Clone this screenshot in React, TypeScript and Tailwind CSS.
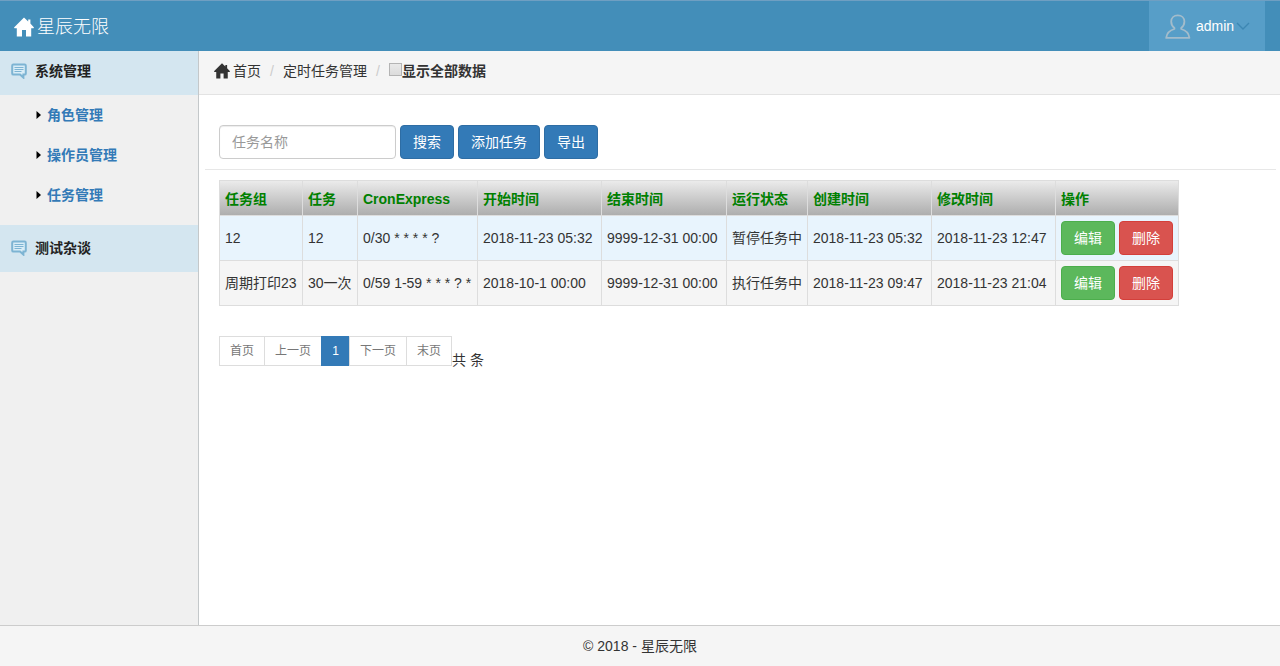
import { useState } from "react";

type Task = {
  id: number;
  group: string;
  name: string;
  cron: string;
  start: string;
  end: string;
  status: string;
  created: string;
  modified: string;
};

const TASKS: Task[] = [
  {
    id: 1,
    group: "12",
    name: "12",
    cron: "0/30 * * * * ?",
    start: "2018-11-23 05:32",
    end: "9999-12-31 00:00",
    status: "暂停任务中",
    created: "2018-11-23 05:32",
    modified: "2018-11-23 12:47",
  },
  {
    id: 2,
    group: "周期打印23",
    name: "30一次",
    cron: "0/59 1-59 * * * ? *",
    start: "2018-10-1 00:00",
    end: "9999-12-31 00:00",
    status: "执行任务中",
    created: "2018-11-23 09:47",
    modified: "2018-11-23 21:04",
  },
];

const COLUMNS = [
  { label: "任务组", width: "w-[83px]" },
  { label: "任务", width: "w-[55px]" },
  { label: "CronExpress", width: "w-[120px]" },
  { label: "开始时间", width: "w-[124px]" },
  { label: "结束时间", width: "w-[125px]" },
  { label: "运行状态", width: "w-[81px]" },
  { label: "创建时间", width: "w-[124px]" },
  { label: "修改时间", width: "w-[124px]" },
  { label: "操作", width: "w-[123px]" },
];

const MENU_ITEMS = ["角色管理", "操作员管理", "任务管理"];

const PAGES = [
  { label: "首页", width: "w-[46px]" },
  { label: "上一页", width: "w-[58px]" },
  { label: "1", width: "w-[29px]" },
  { label: "下一页", width: "w-[58px]" },
  { label: "末页", width: "w-[46px]" },
];

function HomeIcon({ className }: { className: string }) {
  return (
    <svg viewBox="0 0 20 20" fill="currentColor" className={className} aria-hidden="true">
      <path d="M10 0.4 L14.2 4.4 V2.6 H16.4 V6.6 L20 10.4 L19.5 11.2 H17.2 V19.4 H12 V13 H8 V19.4 H2.8 V11.2 H0.5 L0 10.4 Z" />
    </svg>
  );
}

function CommentIcon() {
  return (
    <svg viewBox="0 0 16 16" className="h-4 w-4 shrink-0" fill="none" stroke="#7db4d3" aria-hidden="true">
      <path
        d="M2.4 1.6 H13.6 Q14.8 1.6 14.8 2.8 V10.4 Q14.8 11.6 13.6 11.6 H12.4 V14.6 L9 11.6 H2.4 Q1.2 11.6 1.2 10.4 V2.8 Q1.2 1.6 2.4 1.6 Z"
        fill="#d9edf7"
        strokeWidth="2"
      />
      <path d="M3.5 4.5 H12.5 M3.5 6.5 H12.5 M3.5 8.5 H10.5" strokeWidth="1" />
    </svg>
  );
}

function UserIcon() {
  return (
    <svg viewBox="0 0 26 26" className="h-[26px] w-[26px]" fill="none" stroke="#a3bccb" strokeWidth="1.8" aria-hidden="true">
      <path
        d="M9.4 15 C7 13.2 6.2 11.2 6.2 8.6 C6.2 4.8 9 2.4 12.8 2.4 C16.6 2.4 19.4 4.8 19.4 8.6 C19.4 11.2 18.6 13.2 16.2 15 V16 C20.8 17.2 23.8 19.6 24.4 24.9 H1.2 C1.8 19.6 4.8 17.2 9.4 16 Z"
        strokeLinejoin="round"
      />
    </svg>
  );
}

function MenuHeading({ label, className }: { label: string; className: string }) {
  return (
    <h2 className={`flex items-center gap-2 bg-[#d4e6f0] pl-[11px] text-sm font-bold text-[#222] ${className}`}>
      <CommentIcon />
      {label}
    </h2>
  );
}

export default function App() {
  const [showAll, setShowAll] = useState(false);
  const [keyword, setKeyword] = useState("");

  return (
    <div className="flex min-h-screen flex-col bg-white font-['Liberation_Sans','Noto_Sans_CJK_SC',sans-serif] text-sm leading-5 text-[#333]">
      <header className="flex h-[51px] items-stretch justify-between border-t border-[#6f9fc2] bg-[#438eb9] pr-[15px] text-white">
        <a href="#" className="flex items-center gap-[3px] pl-[14px] pt-[2px] text-lg font-light">
          <HomeIcon className="h-5 w-5" />
          星辰无限
        </a>
        <button type="button" className="flex w-[116px] items-center bg-[#579ec8] pl-4">
          <UserIcon />
          <span className="pl-[5px]">admin</span>
          <svg viewBox="0 0 14 10" className="ml-[2px] h-[10px] w-[14px]" fill="none" stroke="#3d87b3" strokeWidth="1.4" aria-hidden="true">
            <path d="M1 2 L7 8 L13 2" />
          </svg>
        </button>
      </header>

      <div className="flex flex-1">
        <aside className="w-[199px] shrink-0 border-r border-[#c4c8ca] bg-[#f0f0f0]">
          <MenuHeading label="系统管理" className="h-11 pb-1" />
          <ul className="pb-[10px]">
            {MENU_ITEMS.map((item) => (
              <li key={item}>
                <a href="#" className="flex h-10 items-center gap-[6px] pl-9 font-bold text-[#337ab7]">
                  <svg viewBox="0 0 5 8" className="h-2 w-[5px]" fill="#000" aria-hidden="true">
                    <path d="M0.5 0 L5 4 L0.5 8 Z" />
                  </svg>
                  {item}
                </a>
              </li>
            ))}
          </ul>
          <MenuHeading label="测试杂谈" className="h-[47px] pb-px" />
        </aside>

        <main className="min-w-0 flex-1">
          <nav className="flex h-11 items-center border-b border-[#e3e3e3] bg-[#f5f5f5] pb-1 pl-[15px]">
            <a href="#" className="flex items-center gap-[3px]">
              <HomeIcon className="h-4 w-4" />
              首页
            </a>
            <span className="w-[22px] text-center text-[#ccc]">/</span>
            <a href="#">定时任务管理</a>
            <span className="w-[22px] text-center text-[#ccc]">/</span>
            <label className="flex items-center font-bold">
              <input
                type="checkbox"
                checked={showAll}
                onChange={(event) => setShowAll(event.target.checked)}
                className="mb-[3px] h-[13px] w-[13px] appearance-none border border-[#b4b4b4] bg-linear-to-b from-[#e9e9e9] to-[#dcdcdc] checked:bg-[#337ab7]"
              />
              显示全部数据
            </label>
          </nav>

          <form className="ml-[6px] mr-1 flex gap-1 border-b border-[#e7e7e7] pb-[10px] pl-[14px] pt-[30px]">
            <input
              type="text"
              aria-label="任务名称"
              placeholder="任务名称"
              value={keyword}
              onChange={(event) => setKeyword(event.target.value)}
              className="h-[34px] w-[177px] rounded border border-[#ccc] px-3 shadow-[inset_0_1px_1px_rgba(0,0,0,0.075)] placeholder:text-[#999]"
            />
            {["搜索", "添加任务", "导出"].map((label) => (
              <button
                key={label}
                type="button"
                className="h-[34px] rounded border border-[#2e6da4] bg-[#337ab7] px-3 text-white"
              >
                {label}
              </button>
            ))}
          </form>

          <div className="overflow-x-auto pl-5 pt-[10px]">
            <table className="w-[959px] table-fixed border-collapse whitespace-nowrap">
              <thead>
                <tr className="h-[35px] bg-linear-to-b from-[#ebebeb] to-[#acacac]">
                  {COLUMNS.map((column) => (
                    <th
                      key={column.label}
                      className={`border border-[#ddd] px-[5px] pt-[2px] text-left font-bold text-[#008000] ${column.width}`}
                    >
                      {column.label}
                    </th>
                  ))}
                </tr>
              </thead>
              <tbody>
                {TASKS.map((task) => (
                  <tr
                    key={task.id}
                    className="h-[45px] odd:bg-[#e8f4fd] even:bg-[#f5f5f5] [&>td]:border [&>td]:border-[#ddd] [&>td]:px-[5px]"
                  >
                    <td>{task.group}</td>
                    <td>{task.name}</td>
                    <td>{task.cron}</td>
                    <td>{task.start}</td>
                    <td>{task.end}</td>
                    <td>{task.status}</td>
                    <td>{task.created}</td>
                    <td>{task.modified}</td>
                    <td>
                      <div className="flex gap-1">
                        <button
                          type="button"
                          className="h-[34px] rounded border border-[#4cae4c] bg-[#5cb85c] px-3 text-white"
                        >
                          编辑
                        </button>
                        <button
                          type="button"
                          className="h-[34px] rounded border border-[#d43f3a] bg-[#d9534f] px-3 text-white"
                        >
                          删除
                        </button>
                      </div>
                    </td>
                  </tr>
                ))}
              </tbody>
            </table>
          </div>

          <div className="flex items-end pl-5 pt-[30px]">
            <ul className="flex text-xs">
              {PAGES.map((page) => (
                <li key={page.label} className="-ml-px first:ml-0">
                  <a
                    href="#"
                    className={`flex h-[30px] items-center justify-center border ${page.width} ${
                      page.label === "1" ? "border-[#337ab7] bg-[#337ab7] text-white" : "border-[#ddd] text-[#777]"
                    }`}
                  >
                    {page.label}
                  </a>
                </li>
              ))}
            </ul>
            <span className="-mb-1">共 条</span>
          </div>
        </main>
      </div>

      <footer className="flex h-[41px] items-center justify-center border-t border-[#ccc] bg-[#f5f5f5]">
        © 2018 - 星辰无限
      </footer>
    </div>
  );
}
